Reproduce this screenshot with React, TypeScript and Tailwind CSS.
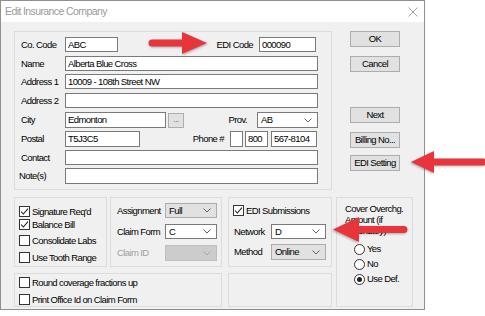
import React from "react";

function TextBox({ cls, value }: { cls: string; value?: string }) {
  return (
    <div className={"h-full border border-[#7a7a7a] bg-white flex items-center pl-[2px] shrink-0 " + cls}>
      {value}
    </div>
  );
}

function Check({ checked }: { checked?: boolean }) {
  return (
    <div className="w-[11px] h-[11px] border border-[#333333] bg-white flex items-center justify-center shrink-0">
      {checked && (
        <svg width="9" height="9" viewBox="0 0 9 9">
          <path d="M1 4.5 L3.3 7 L8 1.6" stroke="#222" strokeWidth="1.1" fill="none" />
        </svg>
      )}
    </div>
  );
}

function Radio({ on }: { on?: boolean }) {
  return (
    <div className="w-[11px] h-[11px] rounded-full border border-[#333333] bg-white flex items-center justify-center shrink-0">
      {on && <div className="w-[5px] h-[5px] rounded-full bg-[#222222]" />}
    </div>
  );
}

function Chevron({ color }: { color: string }) {
  return (
    <svg width="8" height="5" viewBox="0 0 8 5" className="shrink-0">
      <path d="M0.5 0.5 L4 4 L7.5 0.5" stroke={color} strokeWidth="1" fill="none" />
    </svg>
  );
}

function Select({ value, variant, cls }: { value?: string; variant: "white" | "gray" | "disabled"; cls: string }) {
  const base =
    variant === "white"
      ? "border-[#7a7a7a] bg-white"
      : variant === "gray"
      ? "border-[#adadad] bg-[#e1e1e1]"
      : "border-[#bfbfbf] bg-[#cccccc]";
  return (
    <div className={"h-[15px] border flex items-center justify-between pl-[3px] pr-[5px] shrink-0 " + base + " " + cls}>
      <span>{value}</span>
      <Chevron color={variant === "disabled" ? "#a8a8a8" : "#606060"} />
    </div>
  );
}

function Btn({ label, cls }: { label: string; cls?: string }) {
  return (
    <div className={"h-[16px] w-[50px] border border-[#adadad] bg-[#e1e1e1] flex items-center justify-center " + (cls || "")}>
      {label}
    </div>
  );
}

function Arrow({ x, y, len, head, half, rotate }: { x: number; y: number; len: number; head: number; half: number; rotate?: boolean }) {
  // arrow pointing right if !rotate, pointing left if rotate
  const h = half * 2 + 4;
  const cy = half + 2;
  const d = `M4 ${cy - 3.5} L${len - head} ${cy - 3.5} L${len - head} ${cy - half} L${len} ${cy} L${len - head} ${cy + half} L${len - head} ${cy + 3.5} L4 ${cy + 3.5} A3.5 3.5 0 0 1 4 ${cy - 3.5} Z`;
  return (
    <svg
      width={len + 4}
      height={h + 2}
      viewBox={`0 0 ${len + 4} ${h + 2}`}
      className="absolute drop-shadow-[1px_1px_1px_rgba(0,0,0,0.3)]"
      style={{ left: x, top: y, transform: rotate ? "scaleX(-1)" : undefined }}
    >
      <path d={d} fill="#e8353b" />
    </svg>
  );
}

export default function App() {
  return (
    <div className="relative w-[485px] h-[316px] bg-white overflow-hidden font-['Liberation_Sans',Arial,sans-serif] text-[9.5px] tracking-[-0.6px] leading-none text-black">
      <div className="w-[425px] h-[310px] border border-[#8f8f8f] bg-[#f0f0f0] flex flex-col">
        {/* title bar */}
        <div className="h-[21px] bg-white flex items-center justify-between pl-[4px] pr-[6px] shrink-0">
          <span className="text-[10.5px] tracking-[-0.6px] text-[#9a9a9a]">Edit Insurance Company</span>
          <svg width="10" height="10" viewBox="0 0 10 10">
            <path d="M0.5 0.5 L9.5 9.5 M9.5 0.5 L0.5 9.5" stroke="#a0a0a0" strokeWidth="1" />
          </svg>
        </div>

        {/* body */}
        <div className="flex flex-col pl-[13px] pt-[9px]">
          {/* top row */}
          <div className="flex">
            <div className="w-[318px] h-[159px] border border-[#dcdcdc] pl-[6px] pr-[13px] pt-[5px] flex flex-col">
              <div className="flex items-center h-[15px]">
                <span className="w-[44px] shrink-0">Co. Code</span>
                <TextBox cls="w-[53px]" value="ABC" />
                <span className="ml-auto mr-[6px]">EDI Code</span>
                <TextBox cls="w-[57px] mr-[2px]" value="000090" />
              </div>
              <div className="flex items-center h-[15px] mt-[4px]">
                <span className="w-[44px] shrink-0">Name</span>
                <TextBox cls="flex-1" value="Alberta Blue Cross" />
              </div>
              <div className="flex items-center h-[15px] mt-[3px]">
                <span className="w-[44px] shrink-0">Address 1</span>
                <TextBox cls="flex-1" value="10009 - 108th Street NW" />
              </div>
              <div className="flex items-center h-[15px] mt-[4px]">
                <span className="w-[44px] shrink-0">Address 2</span>
                <TextBox cls="flex-1" />
              </div>
              <div className="flex items-center h-[16px] mt-[4px]">
                <span className="w-[44px] shrink-0">City</span>
                <TextBox cls="w-[101px]" value="Edmonton" />
                <div className="ml-[2px] w-[16px] h-[15px] border border-[#adadad] bg-[#e1e1e1] flex items-center justify-center text-[#555] text-[8px]">...</div>
                <span className="ml-auto mr-[10px]">Prov.</span>
                <Select variant="white" value="AB" cls="w-[61px] h-[16px]" />
              </div>
              <div className="flex items-center h-[16px] mt-[3px]">
                <span className="w-[44px] shrink-0">Postal</span>
                <TextBox cls="w-[75px]" value="T5J3C5" />
                <span className="ml-auto mr-[6px]">Phone #</span>
                <TextBox cls="w-[13px]" />
                <TextBox cls="w-[23px] ml-[2px]" value="800" />
                <TextBox cls="w-[46px] ml-[3px] mr-[1px]" value="567-8104" />
              </div>
              <div className="flex items-center h-[15px] mt-[3px]">
                <span className="w-[44px] shrink-0">Contact</span>
                <TextBox cls="flex-1" />
              </div>
              <div className="flex items-center h-[16px] mt-[3px]">
                <span className="w-[44px] shrink-0 -ml-[2px] mr-[2px]">Note(s)</span>
                <TextBox cls="flex-1" />
              </div>
            </div>

            <div className="ml-[18px] flex flex-col">
              <Btn label="OK" />
              <Btn label="Cancel" cls="mt-[9px]" />
              <Btn label="Next" cls="mt-[35px]" />
              <Btn label="Billing No..." cls="mt-[9px]" />
              <Btn label="EDI Setting" cls="mt-[7px]" />
            </div>
          </div>

          {/* bottom row */}
          <div className="flex mt-[7px]">
            <div className="w-[318px] flex flex-col">
              <div className="flex h-[70px]">
                <div className="w-[93px] border border-[#dcdcdc] pl-[4px] pt-[7px] flex flex-col">
                  <div className="flex items-center h-[13px] gap-[2px]"><Check checked /><span>Signature Req'd</span></div>
                  <div className="flex items-center h-[13px] gap-[2px]"><Check checked /><span>Balance Bill</span></div>
                  <div className="flex items-center h-[13px] gap-[2px] mt-[3px]"><Check /><span>Consolidate Labs</span></div>
                  <div className="flex items-center h-[13px] gap-[2px] mt-[4px]"><Check /><span>Use Tooth Range</span></div>
                </div>
                <div className="w-[112px] ml-[3px] border border-[#dcdcdc] pl-[6px] pr-[4px] pt-[5px] flex flex-col">
                  <div className="flex items-center h-[15px]">
                    <span className="w-[48px] shrink-0">Assignment</span>
                    <Select variant="gray" value="Full" cls="flex-1" />
                  </div>
                  <div className="flex items-center h-[15px] mt-[6px]">
                    <span className="w-[48px] shrink-0">Claim Form</span>
                    <Select variant="white" value="C" cls="flex-1" />
                  </div>
                  <div className="flex items-center h-[16px] mt-[6px]">
                    <span className="w-[48px] shrink-0 text-[#a0a0a0]">Claim ID</span>
                    <Select variant="disabled" cls="flex-1 h-[16px]" />
                  </div>
                </div>
                <div className="w-[104px] ml-[6px] border border-[#dcdcdc] pl-[4px] pr-[5px] pt-[7px] flex flex-col">
                  <div className="flex items-center h-[11px] gap-[2px]"><Check checked /><span>EDI Submissions</span></div>
                  <div className="flex items-center h-[15px] mt-[8px] pl-[1px]">
                    <span className="w-[37px] shrink-0">Network</span>
                    <Select variant="white" value="D" cls="flex-1" />
                  </div>
                  <div className="flex items-center h-[16px] mt-[5px] pl-[1px]">
                    <span className="w-[37px] shrink-0">Method</span>
                    <Select variant="gray" value="Online" cls="flex-1 h-[16px]" />
                  </div>
                </div>
              </div>
              <div className="flex h-[34px] mt-[6px]">
                <div className="w-[208px] border border-[#dcdcdc] pl-[4px] pt-[2px] flex flex-col">
                  <div className="flex items-center h-[13px] gap-[2px]"><Check /><span>Round coverage fractions up</span></div>
                  <div className="flex items-center h-[13px] gap-[2px] mt-[5px]"><Check /><span>Print Office Id on Claim Form</span></div>
                </div>
                <div className="w-[104px] ml-[6px] border border-[#dcdcdc]" />
              </div>
            </div>
            <div className="ml-[4px] w-[77px] h-[110px] border border-[#dcdcdc] pl-[8px] pt-[5px] flex flex-col">
              <span className="leading-[11px]">Cover Overchg.</span>
              <span className="leading-[11px]">Amount (if</span>
              <span className="leading-[11px]">secondary)</span>
              <div className="flex items-center h-[12px] gap-[2px] ml-[9px] mt-[7px]"><Radio /><span>Yes</span></div>
              <div className="flex items-center h-[12px] gap-[2px] ml-[9px] mt-[3px]"><Radio /><span>No</span></div>
              <div className="flex items-center h-[12px] gap-[2px] ml-[9px] mt-[3px]"><Radio on /><span>Use Def.</span></div>
            </div>
          </div>
        </div>
      </div>

      {/* annotation arrows */}
      <Arrow x={148} y={30} len={59} head={25} half={11} />
      <Arrow x={407} y={149} len={76} head={23} half={11} rotate />
      <Arrow x={329} y={215} len={75} head={26} half={12.5} rotate />
    </div>
  );
}
